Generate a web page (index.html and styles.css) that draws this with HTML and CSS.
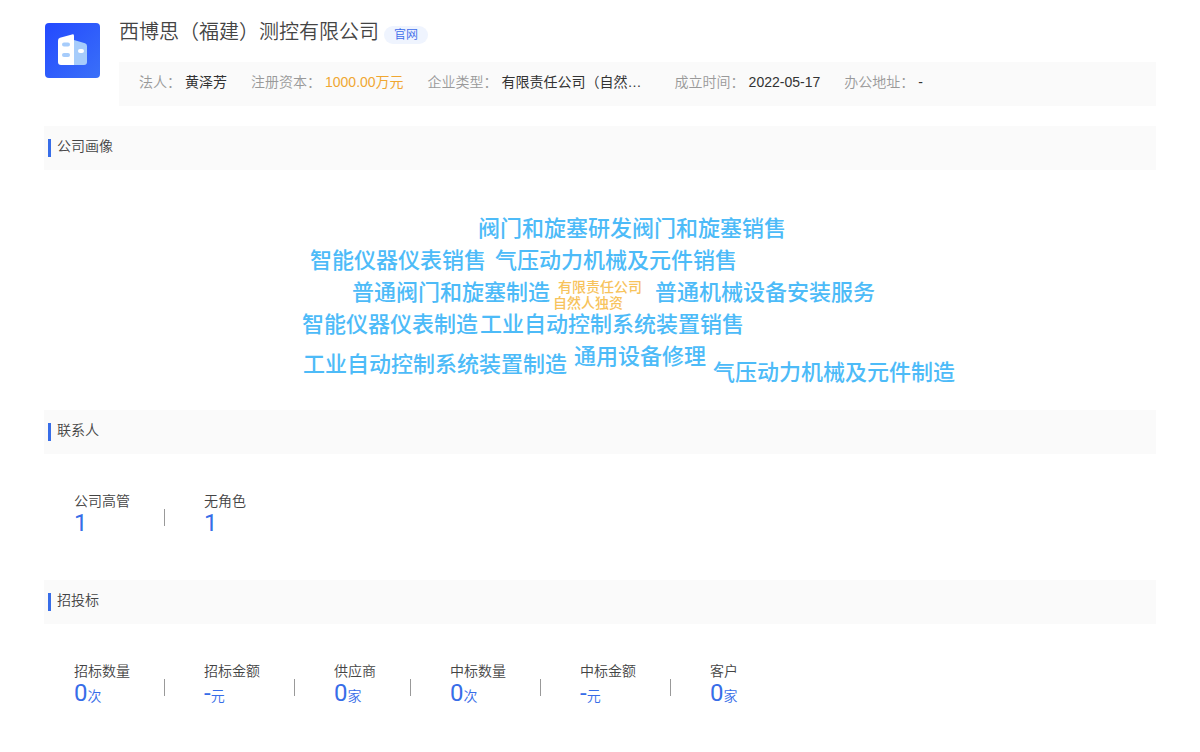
FILE: index.html
```html
<!DOCTYPE html>
<html lang="zh-CN">
<head>
<meta charset="utf-8">
<meta name="viewport" content="width=device-width, initial-scale=1">
<title>西博思（福建）测控有限公司</title>
<link rel="stylesheet" href="styles.css">
</head>
<body>
<main class="page">
  <header class="company">
    <svg class="logo" viewBox="0 0 56 56" aria-hidden="true">
      <defs>
        <linearGradient id="tile" x1="0" y1="0" x2="1" y2="1"><stop offset="0" stop-color="#2349ff"/><stop offset="1" stop-color="#3a70f8"/></linearGradient>
      </defs>
      <rect x="1" y="1" width="55" height="55" rx="4" fill="url(#tile)"/>
      <path d="M30 18l11 3.300q2 .7 2 2.700v16q0 3-3 3H30z" fill="#a6ccfb"/>
      <path d="M14 18.500q0-2 2-2.700l12-3.400q2-.4 2 1.300V43H17q-3 0-3-3z" fill="#fff"/>
      <rect x="18" y="20.500" width="8" height="4" rx="2" fill="#a6ccfb"/>
      <rect x="18" y="31" width="8" height="4" rx="2" fill="#a6ccfb"/>
      <rect x="34" y="27" width="6" height="4" rx="2" fill="#fff"/>
    </svg>
    <div class="company-body">
      <div class="title-row">
        <h1 class="title">西博思（福建）测控有限公司</h1>
        <a class="tag" href="#">官网</a>
      </div>
      <dl class="facts">
        <div class="fact"><dt>法人：</dt><dd>黄泽芳</dd></div>
        <div class="fact"><dt>注册资本：</dt><dd class="money">1000.00万元</dd></div>
        <div class="fact"><dt>企业类型：</dt><dd class="type">有限责任公司（自然…</dd></div>
        <div class="fact"><dt>成立时间：</dt><dd>2022-05-17</dd></div>
        <div class="fact"><dt>办公地址：</dt><dd>-</dd></div>
      </dl>
    </div>
  </header>

  <section>
    <h2 class="heading">公司画像</h2>
    <div class="cloud">
      <span class="word w1">阀门和旋塞研发</span>
      <span class="word w2">阀门和旋塞销售</span>
      <span class="word w3">智能仪器仪表销售</span>
      <span class="word w4">气压动力机械及元件销售</span>
      <span class="word w5">普通阀门和旋塞制造</span>
      <span class="word minor w6">有限责任公司</span>
      <span class="word minor w7">自然人独资</span>
      <span class="word w8">普通机械设备安装服务</span>
      <span class="word w9">智能仪器仪表制造</span>
      <span class="word w10">工业自动控制系统装置销售</span>
      <span class="word w11">工业自动控制系统装置制造</span>
      <span class="word w12">通用设备修理</span>
      <span class="word w13">气压动力机械及元件制造</span>
    </div>
  </section>

  <section>
    <h2 class="heading">联系人</h2>
    <dl class="stats">
      <div class="stat"><dt>公司高管</dt><dd>1</dd></div>
      <div class="stat"><dt>无角色</dt><dd>1</dd></div>
    </dl>
  </section>

  <section>
    <h2 class="heading">招投标</h2>
    <dl class="stats">
      <div class="stat"><dt>招标数量</dt><dd>0<small>次</small></dd></div>
      <div class="stat"><dt>招标金额</dt><dd>-<small>元</small></dd></div>
      <div class="stat"><dt>供应商</dt><dd>0<small>家</small></dd></div>
      <div class="stat"><dt>中标数量</dt><dd>0<small>次</small></dd></div>
      <div class="stat"><dt>中标金额</dt><dd>-<small>元</small></dd></div>
      <div class="stat"><dt>客户</dt><dd>0<small>家</small></dd></div>
    </dl>
  </section>
</main>
</body>
</html>
```
FILE: styles.css
```css
* { box-sizing: border-box; }
body {
  margin: 0;
  background: #fff;
  color: #444;
  font: 350 14px/20px "Liberation Sans", "Noto Sans CJK SC", sans-serif;
}
h1, h2, dl, dd { margin: 0; font-weight: inherit; }
.page { padding: 16px 44px; }

.company { display: flex; gap: 19px; margin-bottom: 20px; }
.logo { flex: none; width: 56px; height: 56px; margin-top: 6px; }
.company-body { flex: 1; min-width: 0; }
.title-row { display: flex; align-items: center; gap: 5px; margin-bottom: 14px; }
.title { font-size: 20px; line-height: 32px; }
.tag {
  margin-top: 6px;
  padding: 0 10px;
  border-radius: 9px;
  background: #eff4fe;
  color: #3d6bea;
  font-size: 12px;
  line-height: 18px;
  text-decoration: none;
}
.facts {
  display: flex;
  flex-wrap: wrap;
  column-gap: 24px;
  padding: 10px 20px 14px;
  background: #fafafa;
}
.fact { display: flex; gap: 4px; }
.fact dt { color: #999; }
.fact dd { color: #333; font-weight: 400; }
.fact .money { color: #f0a732; }
.fact .type { min-width: 149px; }

.heading {
  display: flex;
  gap: 6px;
  padding: 10px 4px 13px;
  background: #fafafa;
  font-size: 14px;
}
.heading::before {
  content: "";
  width: 3px;
  height: 18px;
  margin-top: 3px;
  background: #376de8;
}

/* Word cloud: a free canvas, centred in its section */
.cloud { position: relative; width: 740px; height: 240px; margin: 0 auto; }
.word {
  position: absolute;
  color: #4dbbf8;
  font-size: 22px;
  font-weight: 500;
  line-height: 32px;
  white-space: nowrap;
}
.minor { color: #f7c35c; font-size: 14px; line-height: 16px; }
.w1 { left: 248px; top: 43px; }
.w2 { left: 402px; top: 43px; }
.w3 { left: 80px; top: 75px; }
.w4 { left: 265px; top: 75px; }
.w5 { left: 122px; top: 107px; }
.w6 { left: 328px; top: 109px; }
.w7 { left: 323px; top: 125px; }
.w8 { left: 425px; top: 107px; }
.w9 { left: 72px; top: 139px; }
.w10 { left: 250px; top: 139px; }
.w11 { left: 73px; top: 179px; }
.w12 { left: 344px; top: 171px; }
.w13 { left: 483px; top: 187px; }

.stats { display: flex; flex-wrap: wrap; padding: 37px 30px 45px; }
.stat { display: flex; flex-direction: column; position: relative; padding-right: 74px; }
.stat:not(:last-child)::after {
  content: "";
  position: absolute;
  right: 39px;
  top: 18px;
  width: 1px;
  height: 17px;
  background: #999;
}
.stat dd {
  color: #376de8;
  font-family: Roboto, "Noto Sans CJK SC", sans-serif;
  font-size: 24px;
  font-weight: 400;
  line-height: 24px;
}
.stat small { font-size: 14px; font-weight: 350; }
```
